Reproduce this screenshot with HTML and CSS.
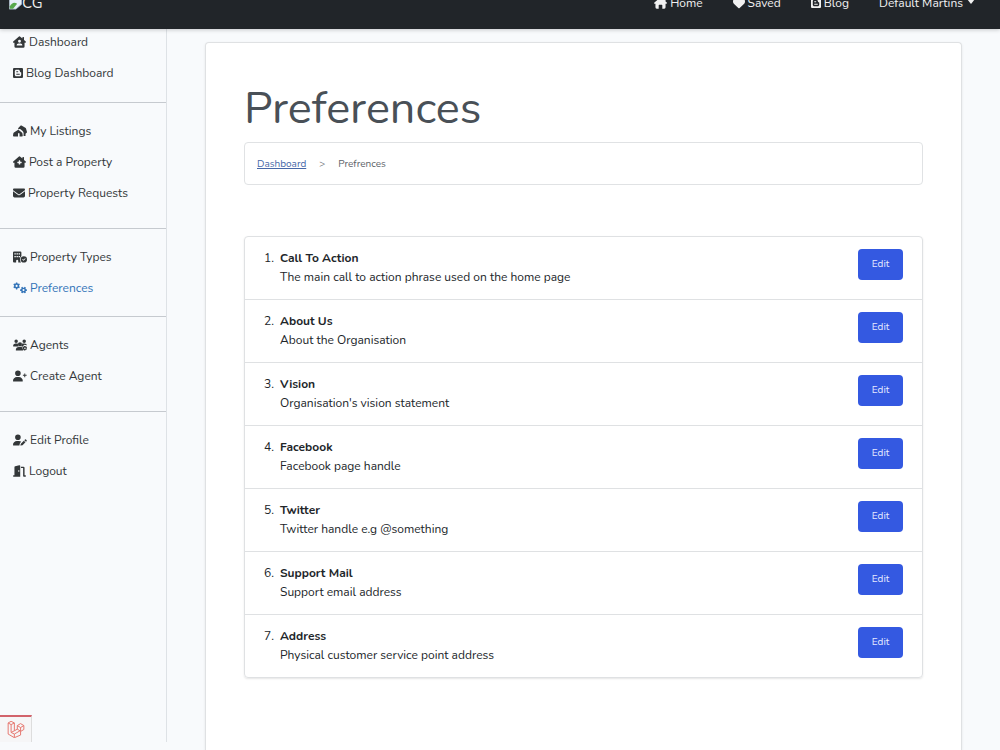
FILE: index.html
```html
<!DOCTYPE html>
<html lang="en">
<head>
<meta charset="utf-8">
<title>Preferences</title>
<link rel="stylesheet" href="styles.css">
</head>
<body>
<header class="topbar">
  <a class="brand" href="#">
    <svg class="brand-pic" viewBox="0 0 16 16"><path fill="#e8eef8" stroke="#aebccd" d="M.5.5h11l4 4v5l-7 6h-8z"/><path fill="#58a84c" d="M1 15v-3q4-7 9-3l-5 6z"/></svg><span>CG</span>
  </a>
  <nav class="topnav">
    <a href="#"><svg class="icon w13" viewBox="0 0 576 512"><path d="M288 0 8 246q-18 20 0 35 8 7 24 7h32v160q0 64 56 64h88V360q0-24 24-24h112q24 0 24 24v152h88q56 0 56-64V288h32q32-2 32-32 0-14-11-24L512 185V56q0-24-24-24h-24q-24 0-24 24v59L309 7q-10-8-21-7z"/></svg>Home</a>
    <a href="#"><svg class="icon w12" viewBox="0 0 512 512"><path d="m47 300 181 169q28 22 56 0l181-169c31-29 47-68 47-109v-6c0-70-50-130-119-141-46-8-93 7-125 40l-12 12-12-12C212 51 165 36 119 44 50 55 0 115 0 185v6c0 41 16 80 47 109z"/></svg>Saved</a>
    <a href="#"><svg class="icon w10" viewBox="0 0 448 512"><path fill-rule="evenodd" d="M48 32h352q48 0 48 48v352q0 48-48 48H48q-48 0-48-48V80q0-48 48-48zm100 75c-38 0-67 29-67 67v164c0 38 29 67 67 67h152c38 0 67-29 67-67v-95c0-18-12-22-28-22-18 0-25-6-27-28-4-56-31-86-84-86zm7 71h68q28 20 0 40h-68q-28-20 0-40zm0 114h139q28 20 0 40H155q-28-20 0-40z"/></svg>Blog</a>
    <a href="#">Default Martins<svg class="caret" viewBox="0 0 8 5"><path d="M0 0h8L4 5z"/></svg></a>
  </nav>
</header>
<div class="layout">
  <nav class="sidebar">
    <ul class="group first">
      <li><a href="#"><svg class="icon w13" viewBox="0 0 576 512"><path fill-rule="evenodd" d="M265 8 10 232q-20 20-4 42 10 14 26 14h32v168q0 56 56 56h336q56 0 56-56V288h32q28-2 32-32 0-14-10-24L488 162V56q0-24-24-24h-24q-24 0-24 24v42L309 7q-22-14-44 1zm23 152a64 64 0 1 1 0 128 64 64 0 0 1 0-128zm-48 160h96q80 4 80 80 0 16-16 16H176q-16 0-16-16 0-76 80-80z"/></svg>Dashboard</a></li>
      <li><a href="#"><svg class="icon w10" viewBox="0 0 448 512"><path fill-rule="evenodd" d="M48 32h352q48 0 48 48v352q0 48-48 48H48q-48 0-48-48V80q0-48 48-48zm100 75c-38 0-67 29-67 67v164c0 38 29 67 67 67h152c38 0 67-29 67-67v-95c0-18-12-22-28-22-18 0-25-6-27-28-4-56-31-86-84-86zm7 71h68q28 20 0 40h-68q-28-20 0-40zm0 114h139q28 20 0 40H155q-28-20 0-40z"/></svg>Blog Dashboard</a></li>
    </ul>
    <ul class="group roomy">
      <li><a href="#"><svg class="icon w14" viewBox="0 0 640 512"><path fill-rule="evenodd" d="M352 4q18-6 36 4l174 100q24 14 32 38l44 146q8 28-14 46l-52 42V480h-88V348q-4-56-46-92l-92-80q-38-28-78-8l-42 14 18-58q8-24 30-40zM220 205q22-12 44 4l140 112q24 18 28 48l14 105q-2 34-34 38H300V390q-2-34-35-38-34 4-37 38v122H36q-34-4-36-38l14-105q4-30 28-48z"/></svg>My Listings</a></li>
      <li><a href="#"><svg class="icon w13" viewBox="0 0 576 512"><path fill-rule="evenodd" d="M265 8 10 232q-20 20-4 42 10 14 26 14h32v168q0 56 56 56h336q56 0 56-56V288h32q28-2 32-32 0-14-10-24L488 162V56q0-24-24-24h-24q-24 0-24 24v42L309 7q-22-14-44 1zm-9 188q0-16 16-16h32q16 0 16 16v48h48q16 0 16 16v32q0 16-16 16h-48v48q0 16-16 16h-32q-16 0-16-16v-48h-48q-16 0-16-16v-32q0-16 16-16h48z"/></svg>Post a Property</a></li>
      <li><a href="#"><svg class="icon w12" viewBox="0 0 512 512"><path d="M48 64C21 64 0 86 0 112c0 15 7 29 19 38l218 164q19 12 38 0l218-164c12-9 19-23 19-38 0-26-21-48-48-48zM0 176v208q4 60 64 64h384q60-4 64-64V176L294 339q-38 26-76 0z"/></svg>Property Requests</a></li>
    </ul>
    <ul class="group">
      <li><a href="#"><svg class="icon w14" viewBox="0 0 640 512"><path fill-rule="evenodd" d="M48 0h288q48 0 48 48v163q-64 52-64 157 0 84 50 135-16 9-34 9h-96v-80q-4-44-48-48-44 4-48 48v80H48q-48 0-48-48V48Q0 0 48 0zm16 80v64h64V80zm96 0v64h64V80zm96 0v64h64V80zM64 208v64h64v-64zm96 0v64h64v-64zm96 0v64h64v-64zM496 224a144 144 0 1 1 0 288 144 144 0 0 1 0-288zm56 88-72 72-36-36-24 24 60 58 96-94z"/></svg>Property Types</a></li>
      <li><a class="active" href="#" aria-current="page"><svg class="icon w14" viewBox="0 0 640 512"><path fill-rule="evenodd" d="M135 0h60l11 50 32 17 45-15 30 53-36 36v36l36 36-30 53-45-15-32 18-11 51h-60l-11-51-32-18-45 15-30-53 36-36v-36l-36-36 30-53 45 15 32-17zM165 111a48 48 0 1 0 0 96 48 48 0 0 0 0-96zM640 322v60l-50 11-17 32 15 45-53 30-36-36h-36l-36 36-53-30 15-45-18-32-51-11v-60l51-11 18-32-15-45 53-30 36 36h36l36-36 53 30-15 45 17 32zM481 304a48 48 0 1 0 0 96 48 48 0 0 0 0-96z"/></svg>Preferences</a></li>
    </ul>
    <ul class="group roomy">
      <li><a href="#"><svg class="icon w14" viewBox="0 0 640 512"><path fill-rule="evenodd" d="M144 0a80 80 0 1 1 0 160 80 80 0 0 1 0-160zm368 0a80 80 0 1 1 0 160 80 80 0 0 1 0-160zM107 192h85q20 0 38 10-18 74 34 118H21q-21-2-21-21 8-99 107-107zm295 9q16-9 38-9h86q103 6 114 86-43-35-70-17-44-29-76 3-22 10-38 56h-80q50-44 26-119zM320 128a96 96 0 1 1 0 192 96 96 0 0 1 0-192zM261 352h118q20 0 38 6-10 48 30 73 0 50 27 81H155q-27-2-27-27 8-125 133-133zM514 296h62v28l20 12 24-14 20 48-20 20v24l20 18-28 46-26-10-20 12-4 32h-54l-4-32-20-12-26 10-28-46 20-18v-24l-20-20 28-46 26 12 20-12zm31 72a36 36 0 1 0 0 72 36 36 0 0 0 0-72z"/></svg>Agents</a></li>
      <li><a href="#"><svg class="icon w14" viewBox="0 0 640 512"><path d="M224 0a128 128 0 1 1 0 256 128 128 0 0 1 0-256zM178 304h92c99 0 178 79 178 178q-2 28-30 30H30q-28-2-30-30c0-99 79-178 178-178zM516 140h44v64h64v44h-64v64h-44v-64h-64v-44h64z"/></svg>Create Agent</a></li>
    </ul>
    <ul class="group">
      <li><a href="#"><svg class="icon w14" viewBox="0 0 640 512"><path d="M224 0a128 128 0 1 1 0 256 128 128 0 0 1 0-256zM178 304h92q60 0 106 36l-45 45q-10 10-15 24l-22 88v15H30q-28-2-30-30c0-99 79-178 178-178zM549 235q22-18 44 0l32 32q14 22-4 42l-30 31-74-74zM495 288l74 74-132 132-84 18q-18 0-16-18l22-72z"/></svg>Edit Profile</a></li>
      <li><a href="#"><svg class="icon w13" viewBox="0 0 576 512"><path fill-rule="evenodd" d="M320 32q0-42-44-30L96 47q-32 8-32 40v361H32q-32 4-32 32t32 32h288zM256 224a30 30 0 1 1 0 64 30 30 0 0 1 0-64zM352 64h112q44 4 48 48v336h32q32 4 32 32t-32 32h-64q-28 0-32-32V128h-96z"/></svg>Logout</a></li>
    </ul>
  </nav>
  <main class="content">
    <section class="card">
      <h1>Preferences</h1>
      <nav class="crumbs" aria-label="Breadcrumb"><a href="#">Dashboard</a><span>&gt;</span><span>Prefrences</span></nav>
      <ol class="prefs">
        <li><span class="num">1.</span><div class="text"><strong>Call To Action</strong><p>The main call to action phrase used on the home page</p></div><button type="button">Edit</button></li>
        <li><span class="num">2.</span><div class="text"><strong>About Us</strong><p>About the Organisation</p></div><button type="button">Edit</button></li>
        <li><span class="num">3.</span><div class="text"><strong>Vision</strong><p>Organisation's vision statement</p></div><button type="button">Edit</button></li>
        <li><span class="num">4.</span><div class="text"><strong>Facebook</strong><p>Facebook page handle</p></div><button type="button">Edit</button></li>
        <li><span class="num">5.</span><div class="text"><strong>Twitter</strong><p>Twitter handle e.g @something</p></div><button type="button">Edit</button></li>
        <li><span class="num">6.</span><div class="text"><strong>Support Mail</strong><p>Support email address</p></div><button type="button">Edit</button></li>
        <li><span class="num">7.</span><div class="text"><strong>Address</strong><p>Physical customer service point address</p></div><button type="button">Edit</button></li>
      </ol>
    </section>
  </main>
</div>
<button class="debug" type="button" aria-label="Open debug bar"><svg viewBox="0 0 50 52"><path d="M1 6 10 1l10 5v24l9-5V14l10-6 10 6v12l-10 6v11L20 51 1 40zM1 6l9 5 10-5M10 11v24l10 5 19-11M20 40v11M10 35l10-5M29 14l10 6 10-6M39 20v12M29 25l10 6"/></svg></button>
</body>
</html>
```
FILE: styles.css
```css
* { box-sizing: border-box; }
html { height: 100%; }
body {
  margin: 0;
  height: 100%;
  overflow: hidden;
  background: #f8fafc;
  color: #212529;
  font-family: Nunito, Lato, sans-serif;
  font-size: 12px;
  line-height: 18px;
}
a { color: inherit; text-decoration: none; }
ul, ol, p, h1 { margin: 0; padding: 0; list-style: none; }
.icon { height: 12px; margin-right: 3px; fill: currentColor; flex: none; }
.w10 { width: 10px; }
.w12 { width: 12px; }
.w13 { width: 13px; }
.w14 { width: 14px; }

.topbar {
  position: relative;
  display: flex;
  justify-content: space-between;
  align-items: flex-start;
  height: 51px;
  margin-top: -22px;
  padding: 16px 25px 0 9px;
  background: #212529;
  color: #f1f1f1;
  box-shadow: 0 1px 4px rgba(0, 0, 0, .2);
}
.brand { display: flex; font-size: 15px; }
.brand-pic { width: 13px; height: 18px; }
.topnav { display: flex; gap: 30px; }
.topnav a { display: flex; align-items: center; }
.caret { width: 8px; height: 5px; margin: 0 0 3px 4px; fill: currentColor; }

.layout { display: flex; height: calc(100% - 29px); }
.sidebar {
  flex: 0 0 167px;
  margin-bottom: 8px;
  border-right: 1px solid #dee2e6;
}
.group { padding: 12px 0 13px; border-bottom: 1px solid #c6cacf; }
.group.first { padding: 0 0 14px; margin-top: -3px; }
.group.roomy { padding-bottom: 20px; }
.group:last-child { border-bottom: 0; }
.group a {
  display: flex;
  align-items: center;
  height: 31px;
  padding-left: 13px;
  color: #333739;
}
.group a.active { color: #3273b8; }

.content { flex: 1; padding: 13px 38px 0; }
.card {
  height: 100%;
  padding: 37px 38px 0;
  background: #fff;
  border: 1px solid #dfe1e3;
  border-bottom: 0;
  border-radius: 4px 4px 0 0;
  box-shadow: 0 1px 3px rgba(0, 0, 0, .08);
}
h1 {
  color: #495057;
  font-size: 45px;
  font-weight: 400;
  line-height: 58px;
  margin-bottom: 4px;
}
.crumbs {
  display: flex;
  gap: 13px;
  padding: 12px 12px 11px;
  margin-bottom: 51px;
  border: 1px solid #e0e2e4;
  border-radius: 4px;
  color: #5c6268;
  font-size: 10px;
}
.crumbs a { color: #4768a8; text-decoration: underline; }
.prefs {
  border: 1px solid #dfe1e3;
  border-radius: 4px;
  box-shadow: 0 1px 2px rgba(0, 0, 0, .1);
}
.prefs li {
  display: flex;
  align-items: flex-start;
  padding: 12px 19px;
  line-height: 19px;
  border-bottom: 1px solid #dfe1e3;
}
.prefs li:last-child { border-bottom: 0; }
.num { width: 16px; }
.text { flex: 1; }
.text strong { display: block; font-weight: 700; }
.prefs button {
  width: 45px;
  height: 31px;
  border: 0;
  border-radius: 4px;
  background: #3459e1;
  color: #e6ebff;
  font: inherit;
  font-size: 10px;
}
.debug {
  position: fixed;
  left: 0;
  bottom: 8px;
  width: 32px;
  height: 27px;
  padding: 3px 0 0;
  border: 0;
  border-top: 2px solid #d2636b;
  border-right: 1px solid #dddddd;
  background: #f6f6f7;
}
.debug svg { width: 18px; height: 17px; fill: none; stroke: #e5776f; stroke-width: 3; }
```
